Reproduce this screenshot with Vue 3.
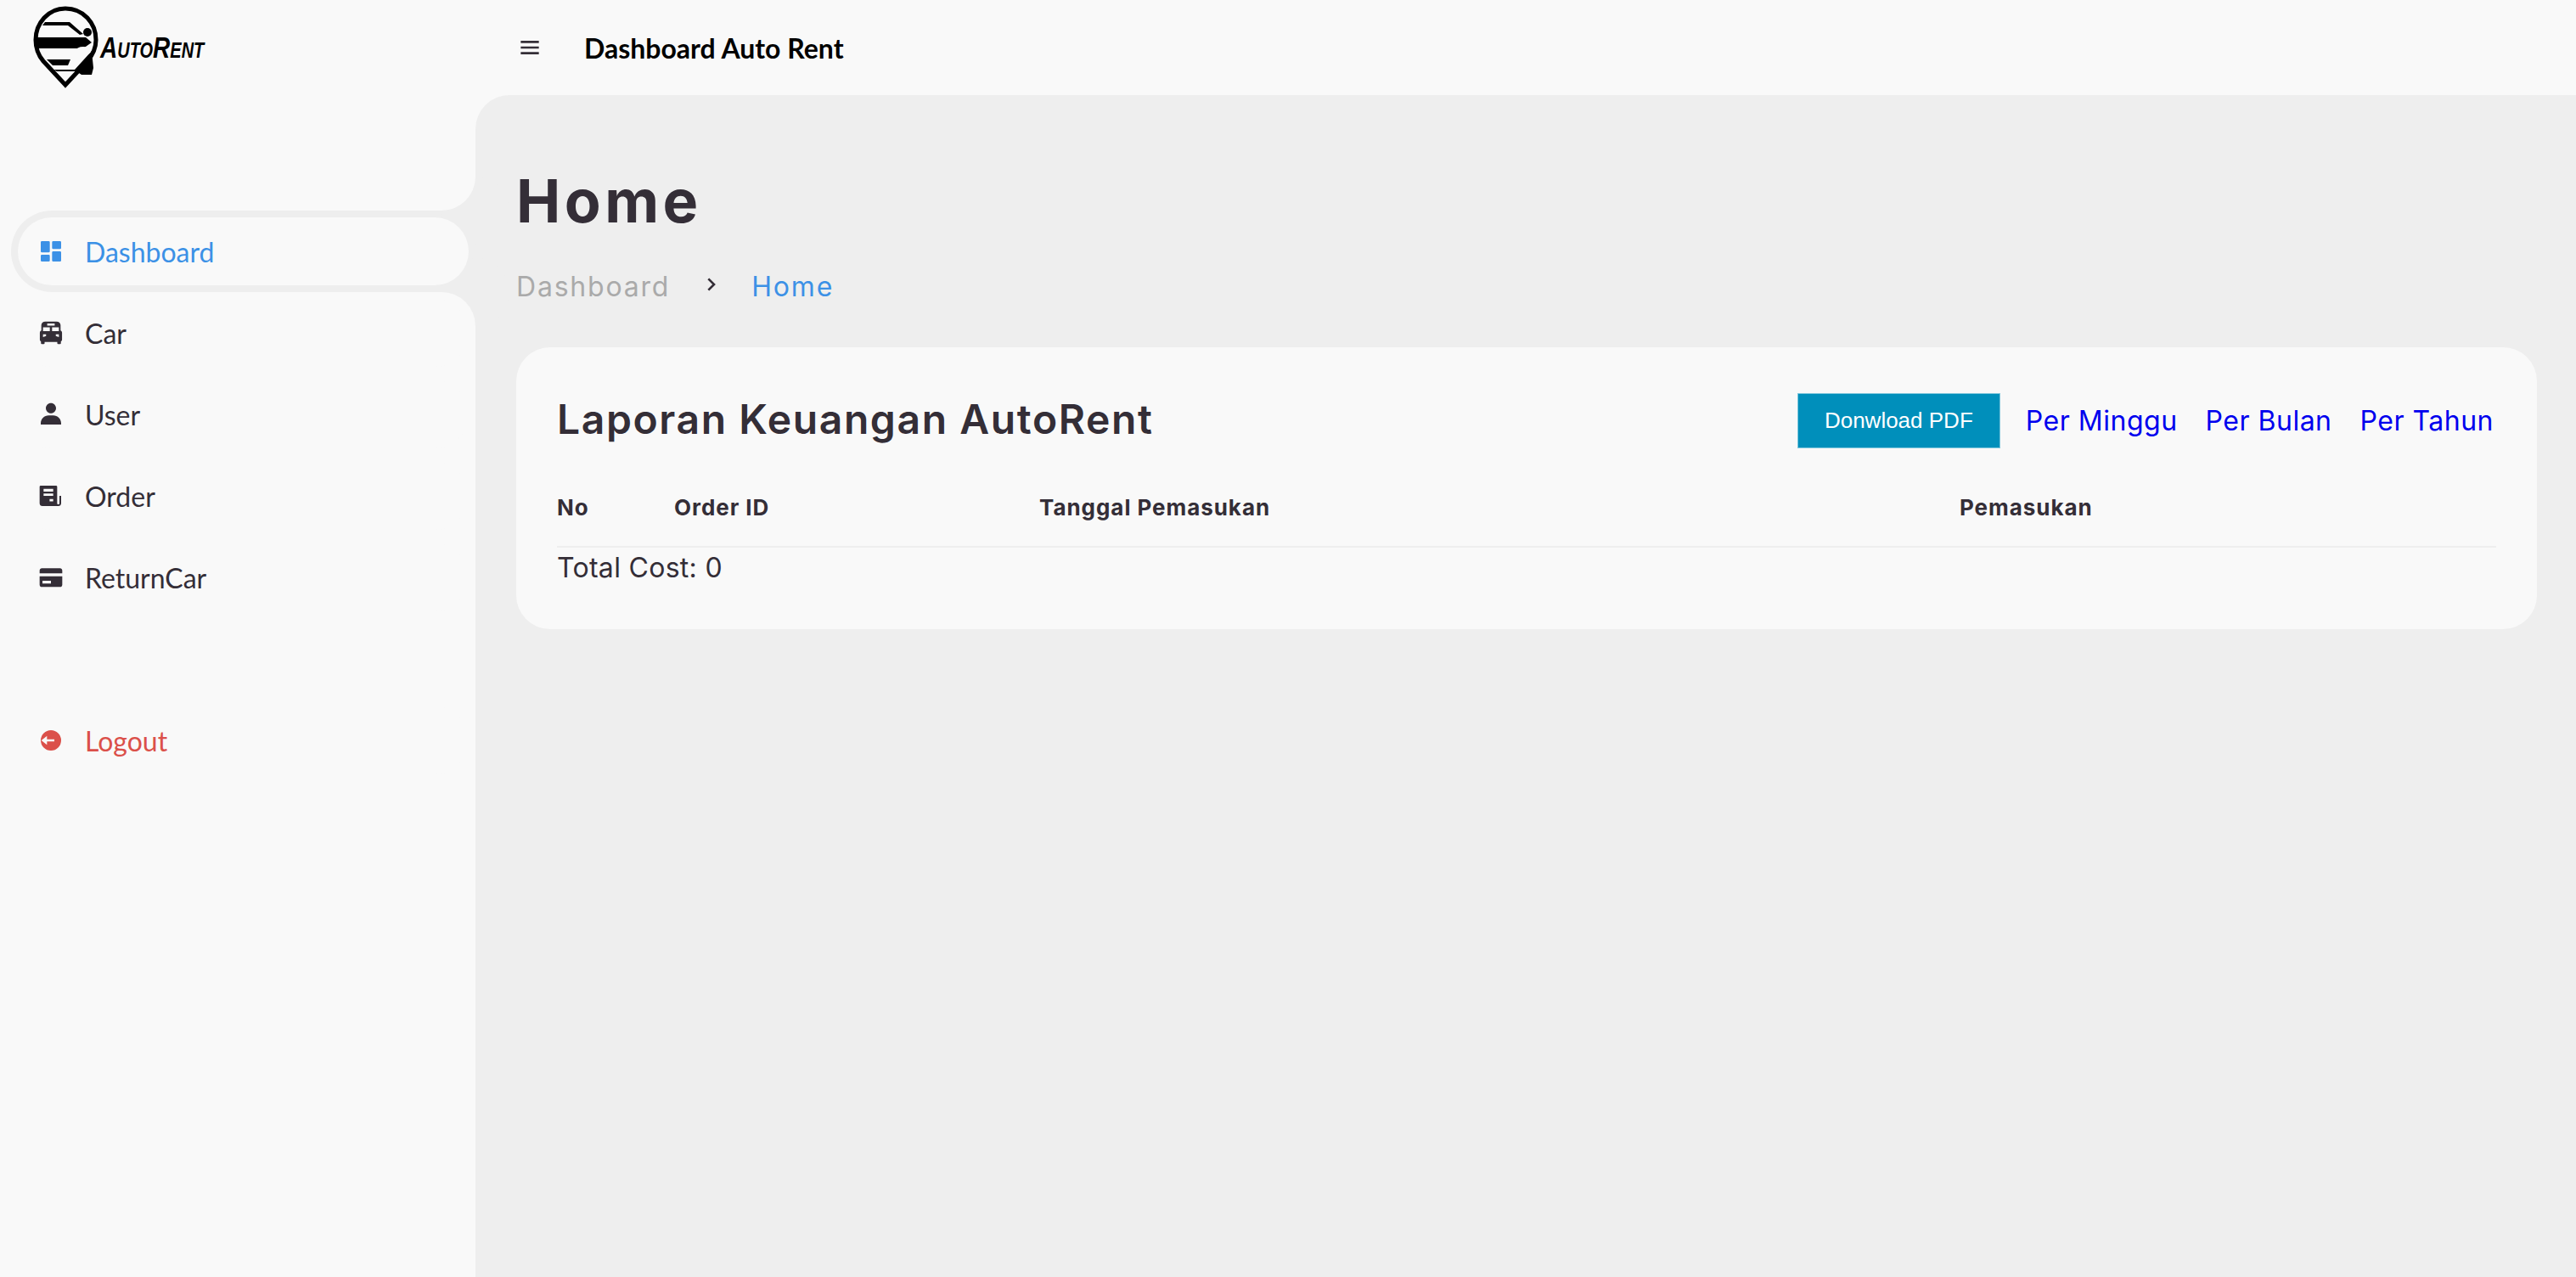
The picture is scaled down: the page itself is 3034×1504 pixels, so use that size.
<script setup>
const menu = [
  { label: 'Dashboard', active: true, d: 'M4 13h6a1 1 0 0 0 1-1V4a1 1 0 0 0-1-1H4a1 1 0 0 0-1 1v8a1 1 0 0 0 1 1zm-1 7a1 1 0 0 0 1 1h6a1 1 0 0 0 1-1v-4a1 1 0 0 0-1-1H4a1 1 0 0 0-1 1v4zm10 0a1 1 0 0 0 1 1h6a1 1 0 0 0 1-1v-7a1 1 0 0 0-1-1h-6a1 1 0 0 0-1 1v7zm1-10h6a1 1 0 0 0 1-1V4a1 1 0 0 0-1-1h-6a1 1 0 0 0-1 1v5a1 1 0 0 0 1 1z' },
  { label: 'Car', d: 'M7 2h10C19 2 20.200 3 20.500 5v5c.8.4 1.300 1.100 1.300 2v6c0 .7-.4 1.300-1 1.600v1.600a.8.8 0 0 1-.8.8h-1.600a.8.8 0 0 1-.8-.8V20H6.400v1.200a.8.8 0 0 1-.8.8H4a.8.8 0 0 1-.8-.8v-1.600c-.6-.3-1-.9-1-1.600v-6c0-.9.5-1.600 1.300-2V5C3.800 3 5 2 7 2zM8.700 3.700v1.900h6.600V3.700zM5 7.200v3.300h6V7.200zM13 7.200v3.300h6V7.200zM5 13.300v2.500l2.700-.9.0-1.600zM19 13.300l-2.700 0 0 1.600 2.700.9z' },
  { label: 'User', d: 'M7.500 6.500C7.500 8.981 9.519 11 12 11s4.500-2.019 4.500-4.500S14.481 2 12 2 7.500 4.019 7.500 6.500zM20 21h1v-1c0-3.859-3.141-7-7-7h-4c-3.860 0-7 3.141-7 7v1h17z' },
  { label: 'Order', d: 'M3 3h13.500a1 1 0 0 1 1 1v14.500c0 .6.4 1 1 1s1-.4 1-1V12h1.500v6.500c0 1.500-1 2.500-2.500 2.500H4.500C3 21 2 20 2 18.500V4a1 1 0 0 1 1-1zM5.500 5.800V8.300h8.500V5.800zM5.500 10v2h8.500v-2zM10.800 14.800v2H14v-2z' },
  { label: 'ReturnCar', d: 'M4 4h16c1.100 0 2 .9 2 2v2.400H2V6c0-1.100.9-2 2-2zM2 11h20v7.500c0 1.100-.9 2-2 2H4c-1.100 0-2-.9-2-2zM4.500 15v2.500h7.500V15z' },
]
const logoutIcon = 'M12 3a9 9 0 1 1 0 18 9 9 0 0 1 0-18zM3.500 12l5 4v-3H15v-2H8.500V8z'
const menuIcon = 'M4 6h16v2H4zm0 5h16v2H4zm0 5h16v2H4z'
const columns = ['No', 'Order ID', 'Tanggal Pemasukan', 'Pemasukan']
const ranges = ['Per Minggu', 'Per Bulan', 'Per Tahun']
</script>

<template>
  <div class="page">
    <aside class="sidebar">
      <a class="brand" href="#">
        <svg class="logo" viewBox="0 0 118 112" width="118" height="112">
          <path d="M77 10C98 10 113 27 113 47C113 57 109 65 103 72L77 100L51 72C45 65 42 57 42 47C42 27 57 10 77 10Z" fill="none" stroke="#000" stroke-width="5" />
          <path d="M43 44H101L108 50L98 57H43Z" />
          <path d="M53 26H82L98 40L94 41L80 30H50Z" />
          <circle cx="103" cy="38" r="5" />
          <path d="M55 70H83L80 77H62Z" />
          <path d="M63 82H88L108 60L110 80L108 88H96L90 84H67Z" />
          <ellipse cx="98" cy="60" rx="9" ry="5" fill="#f9f9f9" />
        </svg>
        <span class="logo-text">AutoRent</span>
      </a>
      <ul class="menu">
        <li v-for="item in menu" :key="item.label" :class="{ active: item.active }">
          <a href="#">
            <svg viewBox="0 0 24 24" width="32" height="32" fill="currentColor"><path fill-rule="evenodd" :d="item.d" /></svg>
            <span>{{ item.label }}</span>
          </a>
        </li>
      </ul>
      <ul class="menu bottom">
        <li>
          <a href="#" class="logout">
            <svg viewBox="0 0 24 24" width="32" height="32" fill="currentColor"><path fill-rule="evenodd" :d="logoutIcon" /></svg>
            <span>Logout</span>
          </a>
        </li>
      </ul>
    </aside>

    <div class="content">
      <nav class="topbar">
        <svg viewBox="0 0 24 24" width="32" height="32" fill="#342e37"><path :d="menuIcon" /></svg>
        <a href="#" class="nav-title">Dashboard Auto Rent</a>
      </nav>

      <main class="main">
        <h1>Home</h1>
        <ul class="breadcrumb">
          <li><a href="#">Dashboard</a></li>
          <li class="sep">
            <svg viewBox="0 0 24 24" width="32" height="32" fill="#342e37"><path d="M10.707 17.707L16.414 12l-5.707-5.707-1.414 1.414L13.586 12l-4.293 4.293z" /></svg>
          </li>
          <li><a href="#" class="current">Home</a></li>
        </ul>

        <section class="card">
          <div class="card-head">
            <h3>Laporan Keuangan AutoRent</h3>
            <button class="pdf">Donwload PDF</button>
            <div class="ranges">
              <a v-for="range in ranges" :key="range" href="#">{{ range }}</a>
            </div>
          </div>
          <table>
            <thead>
              <tr>
                <th v-for="col in columns" :key="col">{{ col }}</th>
              </tr>
            </thead>
          </table>
          <p class="total">Total Cost: 0</p>
        </section>
      </main>
    </div>
  </div>
</template>

<style>
html, body {
  margin: 0;
  background: #f9f9f9;
}
</style>

<style scoped>
* {
  box-sizing: border-box;
}

a {
  text-decoration: none;
}

ul {
  list-style: none;
  margin: 0;
  padding: 0;
}

.page {
  display: flex;
  min-height: 100vh;
  overflow: hidden;
  background: #f9f9f9;
  color: #342e37;
  font-family: Inter, sans-serif;
}

.sidebar {
  flex: 0 0 560px;
  font-family: Lato, sans-serif;
}

.brand {
  display: flex;
  height: 112px;
  color: #000;
}

.logo {
  display: block;
  flex: none;
}

.logo-text {
  height: 34px;
  margin-top: 39px;
  font-family: "Liberation Sans", sans-serif;
  font-size: 35px;
  font-weight: 700;
  font-style: italic;
  font-variant: small-caps;
  line-height: 34px;
  transform: scaleX(0.8);
  transform-origin: left center;
}

.menu {
  margin-top: 136px;
}

.menu.bottom {
  margin-top: 96px;
}

.menu li {
  position: relative;
  height: 96px;
  margin-left: 13px;
  padding: 8px;
  border-radius: 48px 0 0 48px;
}

.menu li.active {
  background: #eee;
}

.menu li.active::before,
.menu li.active::after {
  content: '';
  position: absolute;
  right: 0;
  width: 80px;
  height: 80px;
  border-radius: 50%;
}

.menu li.active::before {
  top: -80px;
  box-shadow: 40px 40px 0 #eee;
}

.menu li.active::after {
  bottom: -80px;
  box-shadow: 40px -40px 0 #eee;
}

.menu a {
  display: flex;
  align-items: center;
  gap: 24px;
  height: 80px;
  padding-left: 23px;
  border-radius: 40px;
  background: #f9f9f9;
  color: #342e37;
  font-size: 32px;
}

.menu li.active a {
  position: relative;
  z-index: 1;
  color: #3c91e6;
}

.menu a.logout {
  color: #db504a;
}

.content {
  flex: 1;
  display: flex;
  flex-direction: column;
  min-width: 0;
}

.topbar {
  display: flex;
  align-items: center;
  gap: 48px;
  height: 112px;
  flex: none;
  padding-left: 48px;
}

.nav-title {
  color: #000;
  font-family: Lato, sans-serif;
  font-size: 32px;
  font-weight: 700;
}

.main {
  flex: 1;
  padding: 71px 46px 48px 48px;
  border-top-left-radius: 40px;
  background: #eee;
}

h1 {
  margin: 0;
  font-size: 70px;
  font-weight: 700;
  line-height: 108px;
  letter-spacing: 4.5px;
}

.breadcrumb {
  display: flex;
  align-items: center;
  gap: 32px;
  height: 48px;
  margin-top: 22px;
  font-size: 32px;
  letter-spacing: 1.8px;
}

.breadcrumb a {
  color: #aaa;
}

.breadcrumb .sep {
  display: flex;
  margin-top: -4px;
}

.breadcrumb a.current {
  color: #3c91e6;
}

.card {
  margin-top: 48px;
  padding: 48px 48px 42px;
  border-radius: 40px;
  background: #f9f9f9;
}

.card-head {
  display: flex;
  align-items: center;
  height: 76px;
  padding-right: 3px;
}

h3 {
  flex: 1;
  margin: 0;
  padding-bottom: 4px;
  font-size: 48px;
  font-weight: 600;
  letter-spacing: 1.6px;
}

.pdf {
  width: 239px;
  height: 65px;
  padding: 0;
  border: 1px solid #7fc7dd;
  background: #008fbb;
  color: #fff;
  font-family: "Liberation Sans", sans-serif;
  font-size: 26px;
}

.ranges {
  display: flex;
  gap: 33px;
  margin-left: 30px;
  font-size: 32px;
  letter-spacing: 0.5px;
}

.ranges a {
  color: #00e;
}

table {
  width: 100%;
  margin-top: 29px;
  border-collapse: collapse;
  table-layout: fixed;
  border-bottom: 2px solid #eee;
}

th {
  height: 82px;
  padding: 0 0 10px;
  font-size: 26px;
  font-weight: 700;
  letter-spacing: 0.95px;
  text-align: left;
}

th:nth-child(1) {
  width: 138px;
}

th:nth-child(2) {
  width: 430px;
}

th:nth-child(3) {
  width: 1084px;
}

.total {
  margin: 2px 0 8px;
  font-size: 32px;
  line-height: 44px;
  letter-spacing: 0.3px;
}
</style>
